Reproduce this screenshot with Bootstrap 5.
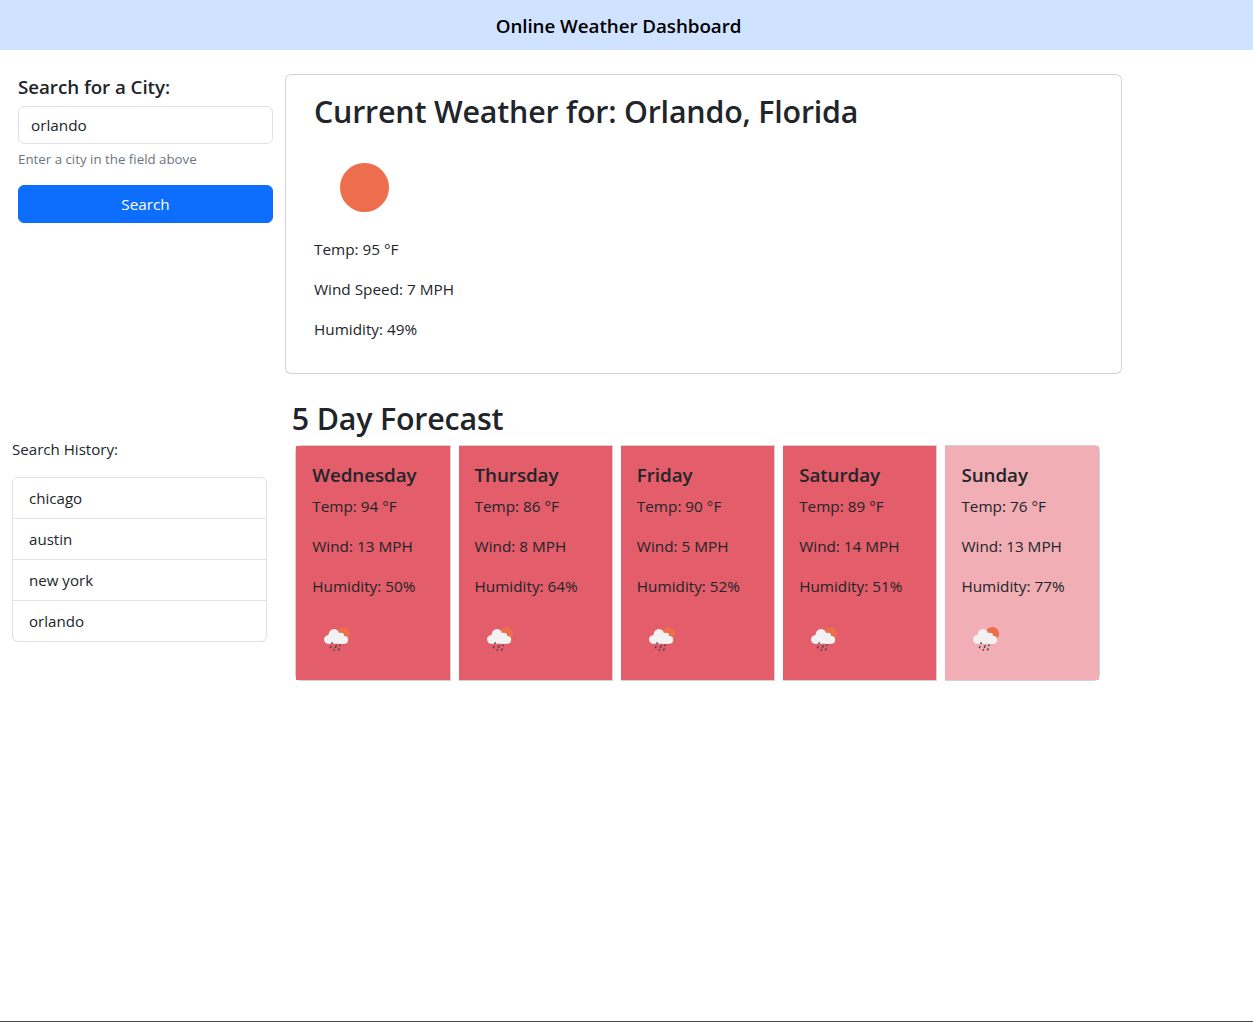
<!DOCTYPE html>
<html lang="en">
<head>
<meta charset="utf-8">
<meta name="viewport" content="width=device-width, initial-scale=1">
<title>Online Weather Dashboard</title>
<link href="https://cdn.jsdelivr.net/npm/bootstrap@5.3.0/dist/css/bootstrap.min.css" rel="stylesheet">
<style>
  body { font-family: "Open Sans", "Noto Sans", sans-serif; font-size: 15.3px; line-height: 24px; min-height: 1022px; border-bottom: 1px solid #454545; }
  .form-control, .btn { font-size: 15.3px; line-height: 24px; }
  .topbar { height: 50px; background: #cfe2ff; padding: 2px 16px 0 0; }
  .site-title, .search-title, .day-title { font-weight: 600; font-size: 18.8px; line-height: 24px; letter-spacing: -0.003em; }
  .site-title { color: #000; }
  .search-title { margin-bottom: 7px; }
  .day-title { padding-top: 2px; line-height: 22px; }
  .side { width: 285px; flex: none; }
  .search-panel { padding: 1px 12px 0 18px; }
  .main-panel { width: 837px; flex: none; }
  .help { font-size: 13.3px; line-height: 20px; color: #6c757d; margin-top: 5px; }
  .big-title { font-weight: 600; font-size: 30.4px; line-height: 38.4px; letter-spacing: -0.0065em; }
  .now .big-title { padding-top: 3px; line-height: 35.4px; }
  .history { padding: 62.6px 18px 0 12px; font-size: 15.1px; }
  .forecast { padding: 25.4px 0 0 6.25px; width: 818.75px; }
  .forecast .big-title { padding: 0 0 3px 0.6px; }
  .day .card-body { background: #e35d6a; }
  .day.mild .card-body { background: #f1aeb5; }
  .day svg, .now svg { display: block; }
</style>
</head>
<body>
<header class="topbar d-flex align-items-center justify-content-center"><span class="site-title">Online Weather Dashboard</span></header>
<main>
  <div class="d-flex pt-4">
    <form class="side search-panel">
      <h2 class="search-title">Search for a City:</h2>
      <input class="form-control" type="text" value="orlando" aria-label="City">
      <div class="help mb-3">Enter a city in the field above</div>
      <button class="btn btn-primary w-100" type="button">Search</button>
    </form>
    <section class="main-panel card now">
      <div class="card-body">
        <div class="px-2 mx-1">
        <h1 class="big-title mb-2">Current Weather for: Orlando, Florida</h1>
        <svg width="100" height="100" viewBox="0 0 100 100" aria-hidden="true"><circle cx="50.5" cy="50.5" r="24.5" fill="#ec6e4c"/></svg>
        <p>Temp: 95 °F</p><p>Wind Speed: 7 MPH</p><p>Humidity: 49%</p>
        </div>
      </div>
    </section>
  </div>
  <div class="d-flex">
    <aside class="side history">
      <p class="mb-3">Search History:</p>
      <ul class="list-group">
        <li class="list-group-item">chicago</li><li class="list-group-item">austin</li><li class="list-group-item">new york</li><li class="list-group-item">orlando</li>
      </ul>
    </aside>
    <section class="forecast">
      <h2 class="big-title mb-0">5 Day Forecast</h2>
      <div class="card-group" id="days"></div>
    </section>
  </div>
</main>
<svg width="0" height="0" class="position-absolute" aria-hidden="true">
  <symbol id="rain" viewBox="0 0 50 50">
    <circle cx="31.3" cy="19.7" r="6.8" fill="#ec6e4c"/>
    <g fill="#f2f2f2">
      <circle cx="22" cy="20.2" r="5.2"/><circle cx="28.8" cy="22.2" r="3.4"/>
      <circle cx="16.2" cy="25.500" r="4.200"/><circle cx="32.300" cy="25.800" r="3.900"/>
      <rect x="16.200" y="20.600" width="14" height="9.100"/><rect x="26" y="24" width="6.300" height="5.700"/>
    </g>
    <path stroke="#484848" stroke-width="1.500" stroke-linecap="round" d="M20.200 28.800l-.3.600M19 32.600l-.6 1M24.200 31.800l-.8 1.500M28.200 31l-.4.500M22.500 35.600l-.3.500M27.200 34.800l-.6 1.200"/>
  </symbol>
</svg>
<script src="https://cdn.jsdelivr.net/npm/bootstrap@5.3.0/dist/js/bootstrap.bundle.min.js"></script>
<script>
const days = [["Wednesday",94,13,50],["Thursday",86,8,64],["Friday",90,5,52],["Saturday",89,14,51],["Sunday",76,13,77]];
document.getElementById("days").innerHTML = days.map(([d,t,w,h]) => `<div class="card day m-1${t<80?" mild":""}"><div class="card-body"><h3 class="day-title mb-2">${d}</h3><p>Temp: ${t} °F</p><p>Wind: ${w} MPH</p><p>Humidity: ${h}%</p><svg width="50" height="50"><use href="#rain"/></svg></div></div>`).join("");
</script>
</body>
</html>
